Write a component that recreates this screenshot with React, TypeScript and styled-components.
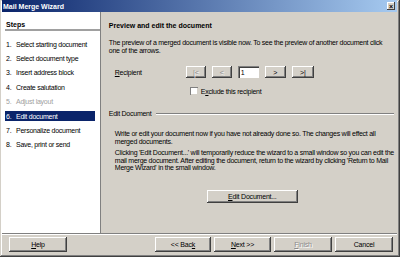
import React from "react";
import styled, { createGlobalStyle } from "styled-components";

const GlobalStyle = createGlobalStyle`
	html, body {
		margin: 0;
		padding: 0;
		background: #d4d0c8;
	}
	body {
		font-family: "Liberation Sans", Arial, sans-serif;
		font-size: 7px;
		color: #000;
	}
`;

const Window = styled.div`
	display: flex;
	flex-direction: column;
	width: 400px;
	height: 257px;
	box-sizing: border-box;
	padding: 0 3px 3px 2px;
	background: #d4d0c8;
	box-shadow: inset -1px -1px #404040, inset 1px 1px #d4d0c8, inset -2px -2px #808080, inset 2px 2px #ffffff;
	overflow: hidden;
`;

const TitleBar = styled.header`
	display: flex;
	align-items: center;
	justify-content: space-between;
	height: 12px;
	padding: 0 2px 0 1px;
	background: linear-gradient(to right, #0a246a, #a6caf0);
	color: #fff;
	font-weight: bold;
	font-size: 7px;
`;

const CloseButton = styled.div`
	display: flex;
	align-items: center;
	justify-content: center;
	width: 8px;
	height: 8px;
	background: #d4d0c8;
	box-shadow: inset -1px -1px #404040, inset 1px 1px #fff;
	color: #000;
	font-size: 7px;
	line-height: 1;
`;

const Body = styled.div`
	display: flex;
	height: 221px;
`;

const StepsPanel = styled.aside`
	width: 98px;
	background: #fff;
	border-right: 1px solid #808080;
	padding-top: 8px;
`;

const StepsHeader = styled.div`
	margin-left: 3px;
	padding: 0 0 1px 1px;
	height: 8px;
	line-height: 9px;
	font-weight: bold;
	border-bottom: 2px solid #a0a0a0;
`;

const StepList = styled.ol`
	list-style: none;
	margin: 6px 0 0 3px;
	padding: 0;
`;

const StepRow = styled.li`
	display: flex;
	align-items: center;
	height: 14.4px;
`;

const StepLabel = styled.span<{ $active?: boolean; $disabled?: boolean }>`
	display: flex;
	align-items: center;
	width: 89px;
	height: 10px;
	padding-left: 1px;
	letter-spacing: -0.25px;
	white-space: nowrap;
	background: ${({ $active }) => ($active ? "#0a246a" : "transparent")};
	color: ${({ $active, $disabled }) => ($active ? "#fff" : $disabled ? "#a0a0a0" : "#000")};
`;

const StepNum = styled.span`
	width: 10px;
`;

const Content = styled.main`
	flex: 1;
	padding: 9px 3px 0 8px;
`;

const Heading = styled.h1`
	margin: 0;
	height: 9px;
	line-height: 9px;
	font-size: 7px;
	font-weight: bold;
`;

const Para = styled.p<{ $indent?: number; $lh?: number }>`
	margin: 0;
	padding-left: ${({ $indent }) => $indent ?? 0}px;
	line-height: ${({ $lh }) => $lh ?? 8}px;
	letter-spacing: -0.25px;
	white-space: nowrap;
`;

const RecipientRow = styled.div`
	display: flex;
	align-items: center;
	height: 12px;
	margin-top: 11px;
	padding-left: 6px;
`;

const FieldLabel = styled.span`
	width: 71px;
	letter-spacing: -0.25px;
`;

const NavGroup = styled.div`
	display: flex;
	gap: 6px;
`;

const Btn = styled.button<{ $w: number; $h?: number; $disabled?: boolean }>`
	display: flex;
	align-items: center;
	justify-content: center;
	width: ${({ $w }) => $w}px;
	height: ${({ $h }) => $h ?? 12}px;
	padding: 0;
	border: none;
	background: #d4d0c8;
	box-shadow: inset -1px -1px #404040, inset 1px 1px #fff, inset -2px -2px #808080;
	font-family: "Liberation Sans", Arial, sans-serif;
	font-size: 7px;
	letter-spacing: -0.2px;
	white-space: nowrap;
	color: ${({ $disabled }) => ($disabled ? "#8a8a8a" : "#000")};
	text-shadow: ${({ $disabled }) => ($disabled ? "1px 1px #fff" : "none")};
`;

const NumInput = styled.div`
	display: flex;
	align-items: center;
	width: 21px;
	height: 12px;
	box-sizing: border-box;
	padding-left: 3px;
	background: #fff;
	box-shadow: inset 1px 1px #808080, inset 2px 2px #404040, inset -1px -1px #fff;
`;

const CheckRow = styled.label`
	display: flex;
	align-items: center;
	gap: 3px;
	height: 8px;
	margin: 9px 0 0 81px;
	letter-spacing: -0.25px;
`;

const CheckBox = styled.span`
	width: 8px;
	height: 8px;
	box-sizing: border-box;
	background: #fff;
	box-shadow: inset 1px 1px #808080, inset -1px -1px #d4d0c8;
`;

const SectionHead = styled.div`
	display: flex;
	align-items: center;
	gap: 5px;
	height: 9px;
	margin-top: 14px;
	letter-spacing: -0.25px;

	&::after {
		content: "";
		flex: 1;
		height: 0;
		border-top: 1px solid #808080;
		border-bottom: 1px solid #fff;
	}
`;

const EditSection = styled.div`
	display: flex;
	flex-direction: column;
	gap: 4px;
	margin-top: 12px;
`;

const EditRow = styled.div`
	display: flex;
	margin: 18px 0 0 98px;
`;

const Divider = styled.div`
	height: 0;
	border-top: 1px solid #808080;
	border-bottom: 1px solid #fff;
`;

const Footer = styled.footer`
	display: flex;
	align-items: center;
	height: 19px;
	padding: 0 4px 0 7px;
`;

const FooterRight = styled.div`
	display: flex;
	gap: 3px;
	margin-left: auto;
`;

const U = styled.span`
	text-decoration: underline;
`;

const steps = [
	"Select starting document",
	"Select document type",
	"Insert address block",
	"Create salutation",
	"Adjust layout",
	"Edit document",
	"Personalize document",
	"Save, print or send",
];

const App = () => {
	return (
		<>
			<GlobalStyle />
			<Window>
				<TitleBar>
					<span>Mail Merge Wizard</span>
					<CloseButton>×</CloseButton>
				</TitleBar>
				<Body>
					<StepsPanel>
						<StepsHeader>Steps</StepsHeader>
						<StepList>
							{steps.map((s, i) => (
								<StepRow key={s}>
									<StepLabel $active={i === 5} $disabled={i === 4}>
										<StepNum>{i + 1}.</StepNum>
										{s}
									</StepLabel>
								</StepRow>
							))}
						</StepList>
					</StepsPanel>
					<Content>
						<Heading>Preview and edit the document</Heading>
						<Para style={{ marginTop: 9 }}>
							The preview of a merged document is visible now. To see the preview of another document click
							<br />
							one of the arrows.
						</Para>
						<RecipientRow>
							<FieldLabel>
								<U>R</U>ecipient
							</FieldLabel>
							<NavGroup>
								<Btn $w={20} $disabled>|&lt;</Btn>
								<Btn $w={20} $disabled>&lt;</Btn>
								<NumInput>1</NumInput>
								<Btn $w={21}>&gt;</Btn>
								<Btn $w={22}>&gt;|</Btn>
							</NavGroup>
						</RecipientRow>
						<CheckRow>
							<CheckBox />
							<span>
								E<U>x</U>clude this recipient
							</span>
						</CheckRow>
						<SectionHead>Edit Document</SectionHead>
						<EditSection>
							<Para $indent={6} $lh={7.5}>
								Write or edit your document now if you have not already done so. The changes will effect all
								<br />
								merged documents.
							</Para>
							<Para $indent={6} $lh={7.5}>
								Clicking 'Edit Document...' will temporarily reduce the wizard to a small window so you can edit the
								<br />
								mail merge document. After editing the document, return to the wizard by clicking 'Return to Mail
								<br />
								Merge Wizard' in the small window.
							</Para>
						</EditSection>
						<EditRow>
							<Btn $w={91} $h={13}>
								<U>E</U>dit Document...
							</Btn>
						</EditRow>
					</Content>
				</Body>
				<Divider />
				<Footer>
					<Btn $w={58} $h={15}>
						<U>H</U>elp
					</Btn>
					<FooterRight>
						<Btn $w={56} $h={15}>
							&lt;&lt; Bac<U>k</U>
						</Btn>
						<Btn $w={57} $h={15}>
							<U>N</U>ext &gt;&gt;
						</Btn>
						<Btn $w={58} $h={15} $disabled>
							<U>F</U>inish
						</Btn>
						<Btn $w={58} $h={15}>
							Cancel
						</Btn>
					</FooterRight>
				</Footer>
			</Window>
		</>
	);
};

export default App;
